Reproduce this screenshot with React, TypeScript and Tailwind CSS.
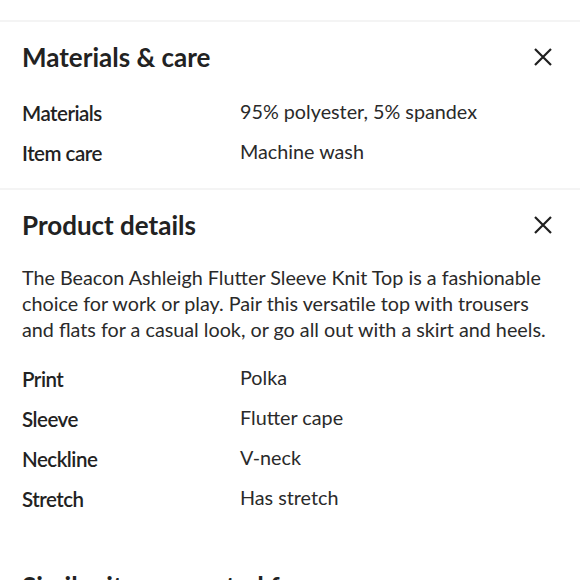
import React from "react";

function CloseIcon() {
  return (
    <svg width="20" height="20" viewBox="0 0 20 20" fill="none" stroke="#1f1f1f" strokeWidth="2.2" strokeLinecap="butt">
      <path d="M2 2 L18 18 M18 2 L2 18" />
    </svg>
  );
}

function Row({ label, value }: { label: string; value: string }) {
  return (
    <div className="flex h-[40px] items-center">
      <div className="w-[218px] text-[20.5px] font-semibold tracking-[-0.5px] text-[#222] pt-[3px]">{label}</div>
      <div className="text-[19.75px] text-[#2a2a2a]">{value}</div>
    </div>
  );
}

export default function App() {
  return (
    <div className="w-[580px] h-[580px] overflow-hidden bg-white font-[Lato,sans-serif]">
      <div className="h-[20px]" />
      <div className="border-t-2 border-[#f4f4f4] px-[22px] pt-[17px] pb-[16px]">
        <div className="flex items-center justify-between h-[36px]">
          <h2 className="text-[26px] font-bold text-[#222]">Materials &amp; care</h2>
          <div className="mr-[5px]"><CloseIcon /></div>
        </div>
        <div className="mt-[17px]">
          <Row label="Materials" value="95% polyester, 5% spandex" />
          <Row label="Item care" value="Machine wash" />
        </div>
      </div>
      <div className="border-t-2 border-[#f4f4f4] px-[22px] pt-[17px]">
        <div className="flex items-center justify-between h-[36px]">
          <h2 className="text-[26px] font-bold text-[#222]">Product details</h2>
          <div className="mr-[5px]"><CloseIcon /></div>
        </div>
        <p className="mt-[22px] text-[19.75px] leading-[26px] text-[#2a2a2a]">
          The Beacon Ashleigh Flutter Sleeve Knit Top is a fashionable choice for work or play. Pair this versatile top with trousers and flats for a casual look, or go all out with a skirt and heels.
        </p>
        <div className="mt-[15px]">
          <Row label="Print" value="Polka" />
          <Row label="Sleeve" value="Flutter cape" />
          <Row label="Neckline" value="V-neck" />
          <Row label="Stretch" value="Has stretch" />
        </div>
        <h2 className="mt-[49px] text-[26px] font-bold text-[#222] whitespace-nowrap">Similar items curated for you</h2>
      </div>
    </div>
  );
}
